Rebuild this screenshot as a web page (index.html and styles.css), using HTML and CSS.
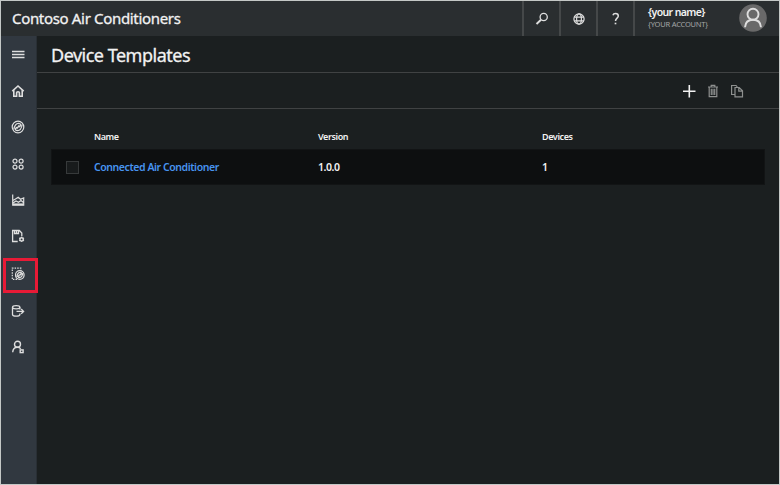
FILE: index.html
```html
<!DOCTYPE html>
<html lang="en">
<head>
<meta charset="utf-8">
<title>Device Templates</title>
<link rel="stylesheet" href="styles.css">
</head>
<body>
<div class="app">
  <header class="topbar">
    <div class="brand"><span>Contoso Air Conditioners</span></div>
    <button class="tool" aria-label="Search"><svg width="14" height="14" viewBox="0 0 14 14"><circle cx="8.700" cy="5" r="3.600" stroke-width="1.300"/><path d="M6 7.700L1.500 12" stroke-width="1.900"/></svg></button>
    <button class="tool" aria-label="Language"><svg width="14" height="14" viewBox="0 0 14 14"><circle cx="7" cy="7" r="5.100"/><ellipse cx="7" cy="7" rx="2.400" ry="5.100"/><path d="M2.300 5.100h9.400M2.300 8.900h9.400"/></svg></button>
    <button class="tool" aria-label="Help"><svg width="14" height="14" viewBox="0 0 14 14"><path d="M3.900 3.200C4.300 2 5.300 1.500 6.500 1.500c1.700 0 2.800.9 2.800 2.400C9.300 6 6.500 6.300 6.500 9" stroke-width="1.500"/><path d="M6.500 10.700v1.600" stroke-width="1.700"/></svg></button>
    <div class="account">
      <div class="who"><div class="user">{your name}</div><div class="acct">{YOUR ACCOUNT}</div></div>
      <svg class="avatar" width="28" height="28" viewBox="0 0 28 28"><circle class="disc" cx="14" cy="14" r="13.800"/><circle cx="14" cy="10.300" r="5.500"/><path d="M6 23.300c.3-4.800 3.300-7.500 8-7.500s7.700 2.700 8 7.500"/></svg>
    </div>
  </header>
  <div class="body">
    <nav class="sidebar">
      <a class="item"><svg width="14" height="14" viewBox="0 0 14 14"><path d="M1 3.500h12.500M1 6.500h12.500M1 9.500h12.500" stroke-width="1.400"/></svg></a>
      <a class="item"><svg width="14" height="14" viewBox="0 0 14 14"><path d="M1.300 7.200L7 2 12.700 7.200M2.800 6v6.200h2.800V8.800q0-1 1.400-1t1.400 1v3.400h2.800V6" stroke-width="1.600"/></svg></a>
      <a class="item"><svg width="14" height="14" viewBox="0 0 14 14"><circle cx="7" cy="7" r="5.800"/><path d="M2.800 9.500C3.300 6.500 4.500 3.300 7.500 3.300c2.400 0 3 2.200 1.200 3.400L5.400 7.500C3.600 8.600 4.200 10.700 6.500 10.700c3 0 4.200-3.200 4.700-6.200M8.300 5L5.700 9"/></svg></a>
      <a class="item"><svg width="14" height="14" viewBox="0 0 14 14"><circle cx="4" cy="4.200" r="2"/><circle cx="10.100" cy="4.200" r="2"/><circle cx="4" cy="10.100" r="2"/><circle cx="10.100" cy="10.100" r="2"/></svg></a>
      <a class="item"><svg width="14" height="14" viewBox="0 0 14 14"><path d="M1.700 1.500v10.700h11V5L9.500 6.300 7.200 4.300 4.500 6 1.900 7.500M2 10l3-2 2.500 1.200L10 7.500l2.500 2"/><path d="M2 11.300h10.500" stroke-width="1.800"/></svg></a>
      <a class="item"><svg width="14" height="14" viewBox="0 0 14 14"><path d="M6.700 12.500H1.600v-11h6.700l2.500 2.500v3.200M3.500 2v2.500h4V2M5.500 2v2" stroke-width="1.300"/><circle cx="10.600" cy="10.400" r="1.700" stroke-width="1.500"/><path d="M10.600 7.700v.9M10.600 12.200v.9M8.200 9.100l.8.400M12.200 11.300l.8.400M8.200 11.700l.8-.4M12.200 9.500l.8-.4"/></svg></a>
      <a class="item selected"><svg width="14" height="14" viewBox="0 0 14 14"><path d="M6 12.400H1.300V1.200h8.500v2" stroke-dasharray="1.500 1.100"/><circle cx="8.800" cy="8" r="4.300"/><path d="M5.800 9.800C6.200 7.500 7.200 5.400 9.200 5.400c1.700 0 1.900 1.500.7 2.200L7.800 8.400c-1.300.8-.8 2.200.7 2.200 2 0 3-2.200 3.400-4.400M9.700 6.700L7.900 9.300"/></svg><span class="highlight"></span></a>
      <a class="item"><svg width="14" height="14" viewBox="0 0 14 14"><ellipse cx="5.200" cy="3.300" rx="3.700" ry="1.600"/><path d="M1.500 3.300v7.200c0 2.200 7.400 2.200 7.400 0V9.400M8.900 3.300v2.200M5.500 7.400h7M10.200 5l2.400 2.400-2.400 2.400" stroke-width="1.300"/></svg></a>
      <a class="item"><svg width="14" height="14" viewBox="0 0 14 14"><circle cx="6.500" cy="4.300" r="3" stroke-width="1.400"/><path d="M1.700 12.300c.2-3.100 1.900-5 4.800-5 1.500 0 2.500.6 3.200 1.500" stroke-width="1.400"/><rect x="9.200" y="9.900" width="2.900" height="2.700" stroke-width="1.400"/></svg></a>
    </nav>
    <main class="content">
      <h1><span>Device Templates</span></h1>
      <div class="commands">
        <svg class="add" width="14" height="14" viewBox="0 0 14 14"><path d="M7.300 1v12.500M1 7.300h12.500" stroke-width="1.600"/></svg>
        <svg width="14" height="14" viewBox="0 0 14 14"><path d="M2 3h10M5.200 3V1.400h3.600V3M3.200 3v9.600h7.600V3M5.300 4.700v6.200M7 4.700v6.200M8.700 4.700v6.200"/></svg>
        <svg width="14" height="14" viewBox="0 0 14 14"><path d="M4.800 10.500H1.600V1.500h4.500L7.300 3M5 3.500h4.200l3.300 3.300v6H5zM8.800 3.600v3.500h3.600"/></svg>
      </div>
      <section class="table">
        <div class="row head"><span></span><span>Name</span><span>Version</span><span>Devices</span></div>
        <div class="row entry"><span class="checkbox"></span><a class="link">Connected Air Conditioner</a><span>1.0.0</span><span>1</span></div>
      </section>
    </main>
  </div>
</div>
</body>
</html>
```
FILE: styles.css
```css
* { box-sizing: border-box; }
body {
  margin: 0;
  background: #c4c8c6;
  color: #f2f2f2;
  font-family: "Noto Sans", "Open Sans", sans-serif;
}
.app {
  display: flex;
  flex-direction: column;
  width: 780px;
  height: 485px;
  padding: 1px;
}
svg {
  display: block;
  flex: none;
  fill: none;
  stroke: #dedede;
  stroke-width: 1.2;
}
.topbar {
  display: flex;
  flex: none;
  height: 35px;
  background: #2a2e30;
}
.brand {
  flex: 1;
  padding-left: 11px;
  font-size: 15px;
  line-height: 35px;
  white-space: nowrap;
  letter-spacing: -0.33px;
  -webkit-text-stroke: 0.3px;
}
.tool {
  display: flex;
  align-items: center;
  justify-content: center;
  width: 37px;
  padding: 0;
  border: 0;
  border-left: 2px solid #454849;
  background: none;
}
.account {
  display: flex;
  justify-content: space-between;
  width: 146px;
  padding: 3px 12px 0 13px;
  border-left: 2px solid #454849;
  white-space: nowrap;
}
.user {
  padding-top: 1px;
  font-size: 10.5px;
  font-weight: 600;
  line-height: 14px;
  letter-spacing: -0.6px;
}
.acct {
  color: #a4a6a7;
  font-size: 7.5px;
  line-height: 10px;
  letter-spacing: -0.2px;
}
.avatar { stroke-width: 1.9; }
.disc {
  fill: #696969;
  stroke: none;
}
.body {
  display: flex;
  flex: 1;
}
.sidebar {
  flex: 0 0 36px;
  padding: 1px 1px 0 0;
  background: #313840;
  border-right: 1px solid #292f35;
}
.item {
  display: flex;
  align-items: center;
  justify-content: center;
  height: 36.2px;
}
.selected {
  position: relative;
  height: 38px;
  margin-top: 1px;
}
.highlight {
  position: absolute;
  top: 3px;
  left: 2px;
  width: 35px;
  height: 35px;
  border: 3px solid #e81a36;
}
.content {
  flex: 1;
  background: #1b1f20;
}
h1 {
  height: 37px;
  margin: 0;
  padding-left: 14px;
  border-bottom: 1px solid #404243;
  font-size: 18px;
  font-weight: 400;
  line-height: 39px;
  letter-spacing: -0.5px;
  -webkit-text-stroke: 0.3px;
}
.commands {
  display: flex;
  align-items: center;
  justify-content: flex-end;
  gap: 10px;
  height: 36px;
  padding-right: 35px;
  border-bottom: 1px solid #404243;
}
.commands svg { stroke: #8e908f; }
.commands .add { stroke: #f2f2f2; }
.table {
  margin: 22px 14px 0;
}
.row {
  display: grid;
  grid-template-columns: 43px 224px 224px 1fr;
  align-items: center;
}
.head {
  height: 18px;
  padding-bottom: 7px;
  font-size: 9px;
  font-weight: 600;
  line-height: 12px;
  letter-spacing: -0.4px;
}
.entry {
  height: 36px;
  border: 1px solid #121415;
  background: #0d0f10;
  font-size: 10.5px;
  font-weight: 600;
  letter-spacing: -0.43px;
}
.entry > :not(.checkbox) { margin-left: -1px; }
.checkbox {
  width: 13px;
  height: 13px;
  margin-left: 14px;
  border: 1px solid #373a3b;
  background: #181b1c;
}
.link { color: #4894ef; }
```
